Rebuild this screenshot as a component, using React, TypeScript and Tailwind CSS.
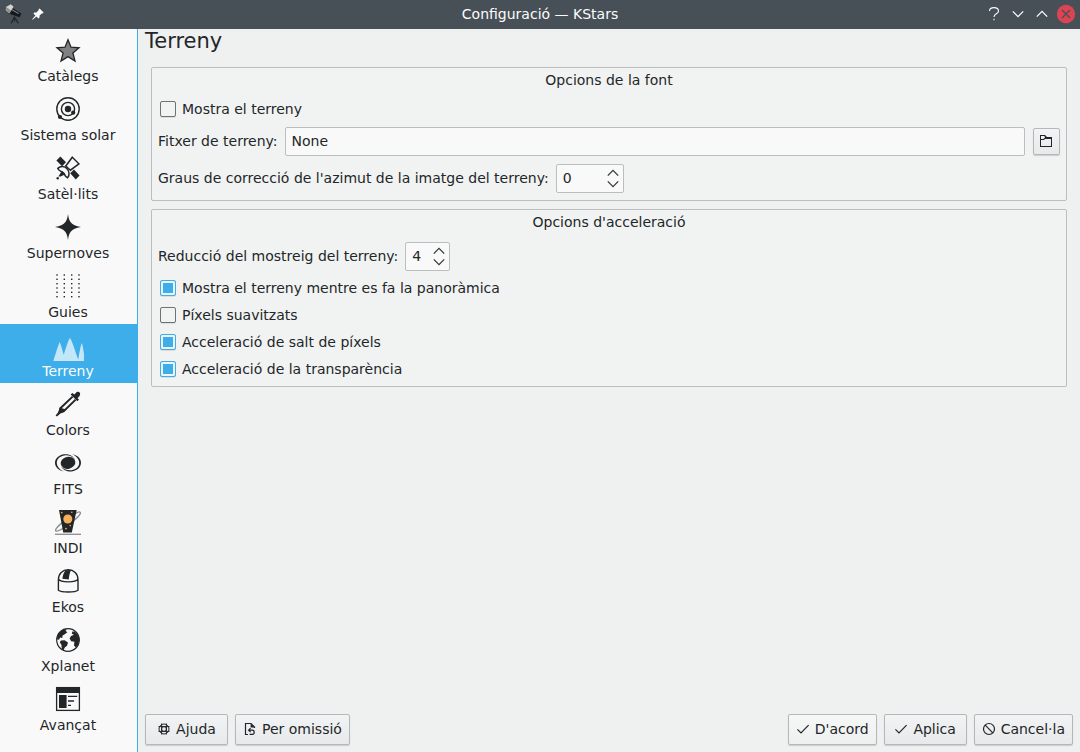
import { useState } from "react";
import type { ReactNode } from "react";

const INK = "#232629";

function PageIcon({ children }: { children: ReactNode }) {
  return (
    <svg viewBox="-3 -3 32 32" className="size-8 shrink-0" fill="none" aria-hidden="true">
      {children}
    </svg>
  );
}

const guideRows = [2, 6.3, 10.7, 15, 19.3, 23.7];
const guideColumns = [2, 9.3, 16.7, 24];

const pages: { name: string; icon: ReactNode }[] = [
  {
    name: "Catàlegs",
    icon: (
      <path
        d="M13 2.8 16 10.2 24 10.8 17.9 15.9 20 24 13 19.6 6 24 8.1 15.9 2 10.8 10 10.2Z"
        fill="#7f8183"
        stroke={INK}
        strokeWidth="1.3"
      />
    ),
  },
  {
    name: "Sistema solar",
    icon: (
      <>
        <g stroke={INK} strokeWidth="1.4">
          <circle cx="13" cy="13" r="11.2" />
          <circle cx="13" cy="13" r="6.6" />
        </g>
        <g fill={INK}>
          <circle cx="13" cy="13" r="3.2" />
          <circle cx="18.2" cy="16.7" r="2.1" />
          <circle cx="5" cy="21" r="2.1" />
        </g>
      </>
    ),
  },
  {
    name: "Satèl·lits",
    icon: (
      <>
        <g fill={INK}>
          <path d="M1.4 5.6 5.4 1.5 11 7.3 7 11.2Z" />
          <path d="M15.2 18.2 19 14.6 24.6 20.6 20.8 24.6Z" />
          <path d="M3.4 21.4 7 15.8 10.6 19.2 5.6 21.6Z" />
          <circle cx="2.7" cy="23.3" r="1.2" />
        </g>
        <g stroke={INK} strokeWidth="1.5">
          <path d="M17.3 2.2 23.9 8.8 15.4 15.2 10.8 11Z" />
          <path d="M2.8 13.4C5.6 10.6 10 11.2 12 13.8C14.4 16.2 14.8 20.2 12.6 22.9C10.8 22.2 9.8 20.4 8.8 18.4C7 16.6 3.8 16 2.8 13.4Z" />
        </g>
      </>
    ),
  },
  {
    name: "Supernoves",
    icon: <path d="M13 0C13.9 7 15.6 11.6 26 13C15.6 14.4 13.9 19 13 26C12.1 19 10.4 14.4 0 13C10.4 11.6 12.1 7 13 0Z" fill={INK} />,
  },
  {
    name: "Guies",
    icon: (
      <>
        {guideColumns.map((x) =>
          guideRows.map((y) => (
            <rect key={`${x}-${y}`} x={x - 0.7} y={y - 0.7} width="1.4" height="1.4" fill={INK} />
          )),
        )}
      </>
    ),
  },
  {
    name: "Terreny",
    icon: (
      <path
        d="M-1.7 29C.6 22 2.8 14 4.7 10C6.2 13 7.4 19 8.8 22.7C10.8 16 13 9 15 5.7C18 11 20.8 21 23.2 27.6C24.2 22 25.4 14.4 26.7 11C27.8 13 28.4 18 29 22V29Z"
        fill="#c3e6f8"
      />
    ),
  },
  {
    name: "Colors",
    icon: (
      <>
        <path
          fill={INK}
          d="M20.6 2.2C22 .4 24 .6 24.8 1.8C25.6 3.2 25 5 23.4 6.2L22.6 7.2 24 8.6 22.4 10.2 15.6 3.6 17.4 2 19.2 3.4Z"
        />
        <path stroke={INK} strokeWidth="2" d="M17.6 5.6 5.6 17 4.2 21.4 8.8 20.2 20.6 8.6" />
        <path fill={INK} d="M4.6 16.4 11 18.4 8.6 21.2 5.4 22.4 2 25.4.6 24.4 3.8 20.6Z" />
      </>
    ),
  },
  {
    name: "FITS",
    icon: (
      <>
        <ellipse cx="13" cy="12.8" rx="7.4" ry="6" fill={INK} transform="rotate(-12 13 12.8)" />
        <g fill={INK}>
          <path d="M20 9.4C18 5.4 13.4 3.8 9.4 4.2C3.6 4.8 0 8.6 0 12.8C0 17 3.4 20.4 8.6 21.4C4.4 19.4 1.8 16.2 1.8 12.8C1.8 9 4.8 6 9.6 5.4C13.8 5 17.4 6.4 20 9.4Z" />
          <path d="M6 16.2C8 20.2 12.6 21.8 16.6 21.4C22.4 20.8 26 17 26 12.8C26 8.6 22.6 5.2 17.4 4.2C21.6 6.2 24.2 9.4 24.2 12.8C24.2 16.6 21.2 19.6 16.4 20.2C12.2 20.6 8.6 19.2 6 16.2Z" />
        </g>
      </>
    ),
  },
  {
    name: "INDI",
    icon: (
      <>
        <g stroke="#8c8e90" strokeWidth="1.3">
          <ellipse cx="13" cy="12.6" rx="15.4" ry="2.8" transform="rotate(-37 13 12.6)" />
          <path d="M0 25.3H26" />
        </g>
        <path d="M4 1H21.7L16.8 23.4H8.2Z" fill={INK} />
        <g fill="#f6b05c">
          <circle cx="12.8" cy="10" r="4.5" />
          <circle cx="6.8" cy="3.6" r=".8" />
          <circle cx="16.8" cy="3.2" r=".8" />
          <circle cx="15.2" cy="16.6" r=".8" />
          <circle cx="11" cy="19.6" r=".9" />
        </g>
      </>
    ),
  },
  {
    name: "Ekos",
    icon: (
      <>
        <path
          stroke={INK}
          strokeWidth="1.4"
          d="M3.4 11.6C3.4 5.6 7.6 1.8 13.2 1.8S23 5.6 23 11.6V22.2C20 24.6 6.4 24.6 3.4 22.2ZM3.4 11.2C5.4 14.8 21 14.8 23 11.2"
        />
        <path d="M10.6 2.2 16.2 2C14.6 4.6 14 8.2 13.8 11.6L7.4 10.8C7.8 7 8.8 4.2 10.6 2.2Z" fill={INK} />
      </>
    ),
  },
  {
    name: "Xplanet",
    icon: (
      <>
        <circle cx="13" cy="13" r="11.3" stroke={INK} strokeWidth="1.2" />
        <g fill={INK}>
          <path d="M2.2 9.2C3.6 5 7.2 2.4 11.6 2L10.6 4 12.4 5.2 9.4 7.6 7.6 8.4 7.2 11 5 10.6 4.2 12.6 2.2 12.8Z" />
          <path d="M5.8 13.4 9.6 13.2 13 15.6 12 18.8 9.8 20.4 8.4 23.4 6.8 21.4 6.4 17.8 4.8 15.6Z" />
          <path d="M14.6 11.4 16 9 19 7.8 16.8 6.8 17.4 4.6 19.4 4.4C22.6 6.4 24.4 9.8 24.3 13.4L22.8 18.6 20.8 20.6 19 18.6 19.4 14.8 16.2 14.2Z" />
        </g>
      </>
    ),
  },
  {
    name: "Avançat",
    icon: (
      <>
        <rect x="1.6" y="1.6" width="22.8" height="22.8" stroke={INK} strokeWidth="1.3" />
        <path d="M1 1H25V7H1ZM4 9H11.6V22H4Z" fill={INK} />
        <path d="M13 10.4H22.2M13 15H19M13 19.4H16" stroke={INK} strokeWidth="1.4" />
      </>
    ),
  },
];

function Chevron({ up = false, className }: { up?: boolean; className: string }) {
  return (
    <svg
      viewBox="0 0 12 8"
      className={className}
      fill="none"
      stroke="currentColor"
      strokeWidth="1.3"
      aria-hidden="true"
    >
      <path d={up ? "M.8 6.6 6 1.4 11.2 6.6" : "M.8 1.4 6 6.6 11.2 1.4"} />
    </svg>
  );
}

function TitleBar() {
  return (
    <header className="flex h-[29px] items-center bg-[#475057] pb-px text-[#fcfcfc]">
      <div className="flex flex-1 items-center gap-2 pl-1">
        <svg viewBox="0 0 20 20" className="size-5" fill="none" aria-hidden="true">
          <path d="M7 19.4 10.5 13 14.4 19.4M10.5 13V17.4" stroke="#24282b" strokeWidth="1.2" />
          <path d="M7.5 3.2 17.4 9.8 15.6 13.2 4.4 9.4Z" fill="#16191b" />
          <path d="M8 5.6 14.6 9.6" stroke="#8e9294" strokeWidth="1.1" />
          <path d="M2 3 6.8.2 9.6 2.8 5.4 9.4 1.8 6Z" fill="#d3d5d3" />
          <path d="M1.8 5.2 5.4 9.4 7 6.6 2.4 3Z" fill="#8d908e" />
        </svg>
        <button type="button" aria-label="A tots els escriptoris">
          <svg viewBox="0 0 12 12" className="size-3" fill="#fcfcfc" aria-hidden="true">
            <path d="M7.6.4 11.6 4.4 10.8 5.4 10 5.2 7.6 7.6 7.4 9.8 6.4 10.6 4.4 8.6.8 11.8.2 11.2 3.4 7.6 1.4 5.6 2.2 4.6 4.4 4.4 6.8 2 6.6 1.2Z" />
          </svg>
        </button>
      </div>
      <h1 className="text-sm">Configuració — KStars</h1>
      <div className="flex flex-1 items-center justify-end gap-1 pr-1">
        <button type="button" aria-label="Ajuda" className="flex size-5 items-center justify-center">
          <svg viewBox="0 0 12 16" className="h-4 w-3" fill="none" stroke="currentColor" aria-hidden="true">
            <path d="M1.5 5C1.5 2.8 3.4 1.6 6 1.6S10.5 2.8 10.5 5C10.5 8 6 7.6 6 11M6 12.8V14.2" strokeWidth="1.1" />
          </svg>
        </button>
        <button type="button" aria-label="Minimitza" className="flex size-5 items-center justify-center">
          <Chevron className="h-2 w-3" />
        </button>
        <button type="button" aria-label="Maximitza" className="flex size-5 items-center justify-center">
          <Chevron up className="h-2 w-3" />
        </button>
        <button type="button" aria-label="Tanca" className="flex size-5 items-center justify-center">
          <svg viewBox="0 0 20 20" className="size-5" aria-hidden="true">
            <circle cx="10" cy="10" r="9.2" fill="#da4453" />
            <path d="M6 6 14 14M14 6 6 14" stroke="#475057" strokeWidth="1.1" />
          </svg>
        </button>
      </div>
    </header>
  );
}

function CheckRow({ id, label, initial = false }: { id: string; label: string; initial?: boolean }) {
  const [checked, setChecked] = useState(initial);
  return (
    <div className="flex h-[27px] items-center gap-1.5 pl-0.5">
      <input
        id={id}
        type="checkbox"
        checked={checked}
        onChange={(event) => setChecked(event.target.checked)}
        className="size-4 appearance-none rounded-xs border border-[#6e7274] bg-[#f1f3f2] shadow-[0_1px_0_#dcdedd] checked:border-[#3daee9] checked:bg-[#3daee9] checked:shadow-[inset_0_0_0_2px_#f1f3f2,0_1px_0_#dcdedd]"
      />
      <label htmlFor={id}>{label}</label>
    </div>
  );
}

function SpinRow({ id, label, initial, width }: { id: string; label: string; initial: number; width: string }) {
  const [value, setValue] = useState(initial);
  return (
    <div className="flex items-center gap-[7px]">
      <label htmlFor={id} className="pb-px">
        {label}
      </label>
      <div className={`flex h-[29px] rounded-xs border border-[#bbbebf] bg-[#f9f9f9] ${width}`}>
        <input
          id={id}
          type="number"
          value={value}
          onChange={(event) => setValue(Number(event.target.value))}
          className="w-0 min-w-0 flex-1 bg-transparent pb-px pl-1.5 outline-none [appearance:textfield] [&::-webkit-inner-spin-button]:appearance-none"
        />
        <div className="flex w-5 flex-col items-center justify-center gap-[3px] text-[#34383b]">
          <button type="button" aria-label="Augmenta" onClick={() => setValue(value + 1)}>
            <Chevron up className="block h-2 w-3" />
          </button>
          <button type="button" aria-label="Disminueix" onClick={() => setValue(value - 1)}>
            <Chevron className="block h-2 w-3" />
          </button>
        </div>
      </div>
    </div>
  );
}

function Group({ title, className, children }: { title: string; className: string; children: ReactNode }) {
  return (
    <section className={`rounded-xs border border-[#bbbebe] bg-[#f1f3f2] px-1.5 pt-0.5 ${className}`}>
      <h3 className="text-center leading-5">{title}</h3>
      {children}
    </section>
  );
}

const buttonFace =
  "rounded-xs border border-[#b5b8b9] bg-linear-to-b from-[#f2f3f4] to-[#e8e9ea] shadow-[0_1px_1px_#c9cbcc]";

const brightFace =
  "rounded-xs border border-[#b5b8b9] bg-linear-to-b from-[#f6f7f7] to-[#eeefef] shadow-[0_1px_1px_#c9cbcc]";

function ActionButton({ label, icon, bright = false }: { label: string; icon: ReactNode; bright?: boolean }) {
  return (
    <button
      type="button"
      className={`flex h-[31px] min-w-[83px] items-center justify-center gap-1 pr-[7px] pb-px pl-1.5 ${
        bright ? brightFace : buttonFace
      }`}
    >
      <svg viewBox="0 0 16 16" className="size-4 shrink-0" fill="none" stroke={INK} aria-hidden="true">
        {icon}
      </svg>
      {label}
    </button>
  );
}

const checkMark = <path d="M2.4 8.4 6 12 13.6 4.2" strokeWidth="1.2" />;

export default function App() {
  const [selected, setSelected] = useState("Terreny");
  const [file, setFile] = useState("None");

  return (
    <div className="flex min-h-screen flex-col bg-[#eff0f0] font-['DejaVu_Sans',sans-serif] text-sm text-[#232629]">
      <TitleBar />
      <div className="flex flex-1">
        <nav className="w-[138px] shrink-0 border-r border-[#3daee9] bg-[#f9f9f9]">
          {pages.map((page) => (
            <button
              key={page.name}
              type="button"
              onClick={() => setSelected(page.name)}
              className={`flex h-[59px] w-full flex-col items-center pt-[5px] pr-px leading-5 ${
                page.name === selected ? "bg-[#3daee9] text-[#fcfcfc]" : ""
              }`}
            >
              <PageIcon>{page.icon}</PageIcon>
              {page.name}
            </button>
          ))}
        </nav>

        <main className="flex min-w-0 flex-1 flex-col px-[7px] pb-[7px]">
          <h2 className="mb-3.5 text-[21px] leading-6">{selected}</h2>

          <div className="flex flex-col gap-2 px-1.5">
            <Group title="Opcions de la font" className="pb-[7px]">
              <div className="mt-[5px]">
                <CheckRow id="show-terrain" label="Mostra el terreny" />
              </div>
              <div className="mt-[5px] flex items-center gap-[7px]">
                <label htmlFor="terrain-file" className="pb-px">
                  Fitxer de terreny:
                </label>
                <input
                  id="terrain-file"
                  type="text"
                  value={file}
                  onChange={(event) => setFile(event.target.value)}
                  className="mr-px h-[29px] min-w-0 flex-1 rounded-xs border border-[#bbbebf] bg-[#f9f9f9] px-1.5 pb-px outline-none"
                />
                <button
                  type="button"
                  aria-label="Obre un fitxer"
                  className={`flex size-[27px] items-center justify-center pr-px pb-px ${buttonFace}`}
                >
                  <svg viewBox="0 0 16 16" className="size-4" aria-hidden="true">
                    <path d="M2 2H7L9 4H14V14H2ZM3 3V6H5.4L7 4.6 6.4 3ZM3 7V13H13V6H7L6 7Z" fill={INK} fillRule="evenodd" />
                  </svg>
                </button>
              </div>
              <div className="mt-2">
                <SpinRow
                  id="azimuth"
                  label="Graus de correcció de l'azimut de la imatge del terreny:"
                  initial={0}
                  width="w-[68px]"
                />
              </div>
            </Group>

            <Group title="Opcions d'acceleració" className="pb-1">
              <div className="mt-2.5 mb-[3px]">
                <SpinRow id="downsample" label="Reducció del mostreig del terreny:" initial={4} width="w-[45px]" />
              </div>
              <CheckRow id="panning" label="Mostra el terreny mentre es fa la panoràmica" initial />
              <CheckRow id="smooth" label="Píxels suavitzats" />
              <CheckRow id="skip" label="Acceleració de salt de píxels" initial />
              <CheckRow id="transparency" label="Acceleració de la transparència" initial />
            </Group>
          </div>

          <footer className="mt-auto flex gap-[7px]">
            <ActionButton
              label="Ajuda"
              icon={
                <>
                  <circle cx="8" cy="8" r="5" />
                  <circle cx="8" cy="8" r="2.4" />
                  <path d="M2.5 5.6H13.5M2.5 10.4H13.5M5.6 2.5V13.5M10.4 2.5V13.5" />
                </>
              }
            />
            <ActionButton
              label="Per omissió"
              icon={
                <>
                  <path d="M6 13.5H3.5V2.5H9L12.5 6V7" strokeWidth="1.2" />
                  <path d="M8.6 2.2 12.8 6.4H8.6Z" fill={INK} stroke="none" />
                  <path d="M8.6 7.2 6.6 9.2 8.6 11.2M6.8 9.2H10.4C12.8 9.2 12.8 13.4 10.4 13.4H7.6" strokeWidth="1.2" />
                </>
              }
            />
            <div className="flex-1" />
            <ActionButton label="D'acord" bright icon={checkMark} />
            <ActionButton label="Aplica" icon={checkMark} />
            <ActionButton
              label="Cancel·la"
              icon={
                <>
                  <circle cx="8" cy="8" r="5.5" strokeWidth="1.2" />
                  <path d="M4.2 4.2 11.8 11.8" strokeWidth="1.2" />
                </>
              }
            />
          </footer>
        </main>
      </div>
    </div>
  );
}
